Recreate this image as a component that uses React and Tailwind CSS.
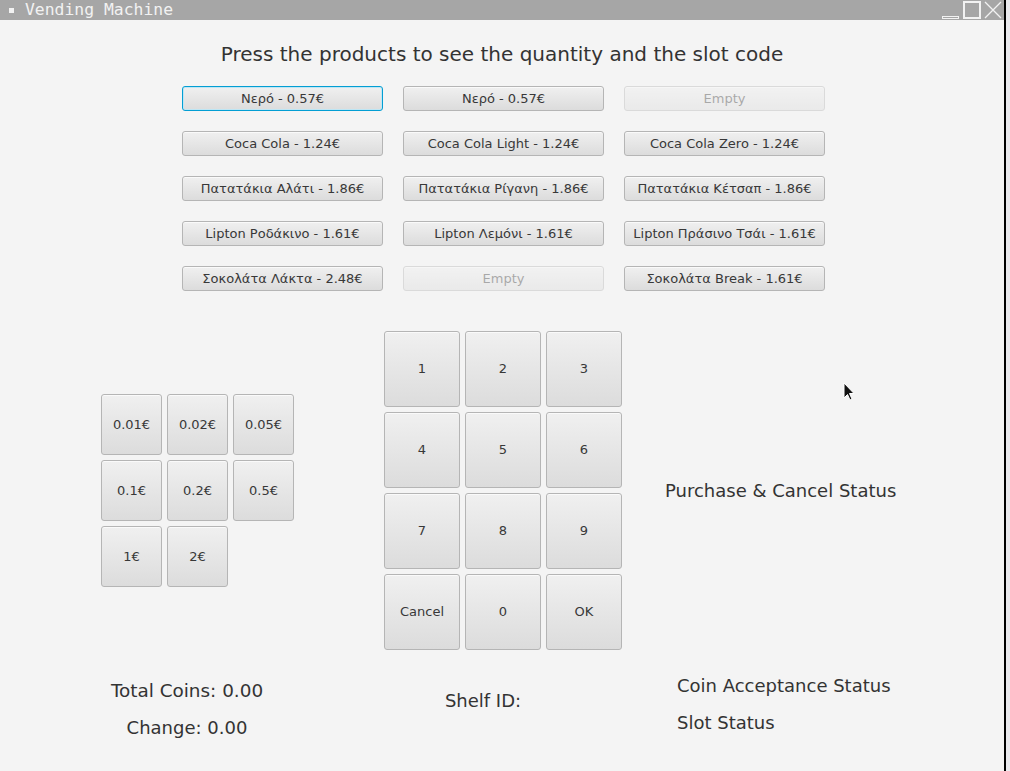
import { useState } from 'react'

const products = [
  ['Νερό - 0.57€', 'Νερό - 0.57€', null],
  ['Coca Cola - 1.24€', 'Coca Cola Light - 1.24€', 'Coca Cola Zero - 1.24€'],
  ['Πατατάκια Αλάτι - 1.86€', 'Πατατάκια Ρίγανη - 1.86€', 'Πατατάκια Κέτσαπ - 1.86€'],
  ['Lipton Ροδάκινο - 1.61€', 'Lipton Λεμόνι - 1.61€', 'Lipton Πράσινο Τσάι - 1.61€'],
  ['Σοκολάτα Λάκτα - 2.48€', null, 'Σοκολάτα Break - 1.61€'],
]

const coins = ['0.01€', '0.02€', '0.05€', '0.1€', '0.2€', '0.5€', '1€', '2€']
const keys = ['1', '2', '3', '4', '5', '6', '7', '8', '9', 'Cancel', '0', 'OK']

// modena-ish button look
const btn =
  'flex items-center justify-center rounded-[3px] border bg-gradient-to-b from-[#f0f0f0] to-[#dcdcdc] text-[#383838]'

function FxButton({ children, className = '', disabled, focused }) {
  return (
    <button
      disabled={disabled}
      className={`${btn} ${className} ${disabled ? 'opacity-40' : ''} ${
        focused
          ? 'border-[#039ed3] shadow-[inset_0_0_0_1px_#bfe6f4]'
          : 'border-[#b5b5b5] shadow-[inset_0_1px_0_#fafafa]'
      }`}
    >
      {children}
    </button>
  )
}

export default function App() {
  const [focus] = useState('0-0')

  return (
    <div className="flex w-[1010px] h-[771px] bg-[#e9e9ed] font-['DejaVu_Sans',sans-serif]">
      <div className="relative flex flex-col w-[1004px] h-full">
        {/* title bar */}
        <div className="flex items-center h-[20px] bg-[#a6a6a6] text-[#f2f2f2]">
          <span className="ml-[9px] w-[5px] h-[5px] bg-[#f2f2f2]" />
          <span className="ml-[11px] font-['DejaVu_Sans_Mono',monospace] text-[16.4px] leading-none">
            Vending Machine
          </span>
          <div className="ml-auto flex items-center h-full">
            <span className="mt-[14px] w-[17px] h-[3px] border border-[#f2f2f2]" />
            <span className="ml-[4px] w-[18px] h-[18px] border-2 border-[#f2f2f2]" />
            <svg className="ml-[3px] mr-[2px]" width="18" height="18" viewBox="0 0 18 18">
              <path d="M1 1L17 17M17 1L1 17" stroke="#f2f2f2" strokeWidth="1.3" />
            </svg>
          </div>
        </div>

        {/* content */}
        <div className="flex-1 flex flex-col bg-[#f4f4f4]">
          <h1 className="mt-[21px] text-center text-[20px] leading-[26px] text-[#333]">
            Press the products to see the quantity and the slot code
          </h1>

          <div className="mt-[19px] ml-[182px] grid grid-cols-[201px_201px_201px] gap-x-[20px] gap-y-[20px]">
            {products.map((row, r) =>
              row.map((p, c) => (
                <FxButton
                  key={`${r}-${c}`}
                  className="h-[25px] text-[13px]"
                  disabled={!p}
                  focused={focus === `${r}-${c}`}
                >
                  {p || 'Empty'}
                </FxButton>
              ))
            )}
          </div>

          {/* coins, keypad, status */}
          <div className="mt-[40px] flex items-center">
            <div className="ml-[101px] self-start mt-[63px] grid grid-cols-[61px_61px_61px] gap-[5px]">
              {coins.map(c => (
                <FxButton key={c} className="h-[61px] text-[13px]">
                  {c}
                </FxButton>
              ))}
            </div>
            <div className="ml-[90px] grid grid-cols-[76px_76px_76px] gap-[5px]">
              {keys.map(k => (
                <FxButton key={k} className="h-[76px] text-[13px]">
                  {k}
                </FxButton>
              ))}
            </div>
            <p className="ml-[43px] text-[18px] text-[#333]">Purchase &amp; Cancel Status</p>
          </div>

          {/* bottom labels */}
          <div className="flex mt-[25px] text-[18px] text-[#333] leading-[22px]">
            <div className="ml-[87px] w-[200px] flex flex-col items-center gap-[15px] mt-[5px]">
              <span className="text-[18.4px]">Total Coins: 0.00</span>
              <span>Change: 0.00</span>
            </div>
            <div className="ml-[96px] w-[200px] flex justify-center mt-[15px]">
              <span>Shelf ID:</span>
            </div>
            <div className="ml-[94px] flex flex-col gap-[15px]">
              <span>Coin Acceptance Status</span>
              <span>Slot Status</span>
            </div>
          </div>
        </div>

        {/* mouse pointer */}
        <svg className="absolute left-[843px] top-[382px]" width="12" height="20" viewBox="0 0 12 20">
          <path d="M1 1L1 16L4.5 12.5L7 18L9 17L6.5 11.5L11 11.5Z" fill="#111" stroke="#fff" strokeWidth="1" />
        </svg>
      </div>
      <div className="w-[2px] h-full bg-black" />
    </div>
  )
}
